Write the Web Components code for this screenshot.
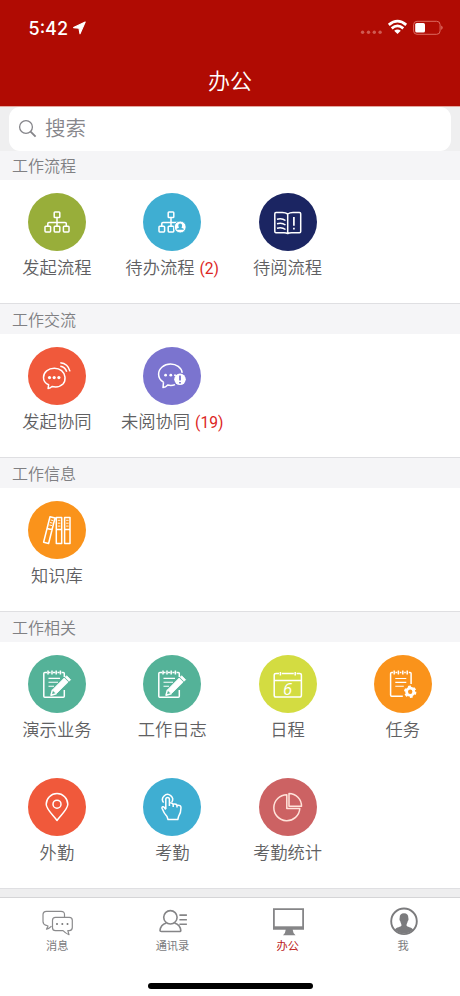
<!DOCTYPE html>
<html lang="zh-CN">
<head>
<meta charset="utf-8">
<title>办公</title>
<style>
body{margin:0;background:#fff;font-family:Inter,"Noto Sans CJK SC",sans-serif;overflow:hidden}
</style>
</head>
<body>
<office-app></office-app>
<script>
const ORG = (dx) => `<g transform="translate(${dx} 0)"><rect x="26.2" y="19" width="5.6" height="5.6" rx=".8"/><path d="M29 24.6V33M19.8 33V30.6Q19.8 29.5 21 29.5H37Q38.3 29.5 38.3 30.6V33"/><rect x="17" y="33.3" width="5.6" height="5.6" rx=".8"/><rect x="26.2" y="33.3" width="5.6" height="5.6" rx=".8"/>`;
const PAD = `<path d="M19 17.6H16.8Q15.8 17.6 15.8 18.6V41.2Q15.8 42.2 16.8 42.2H35.3Q36.3 42.2 36.3 41.2V35M20.6 17.6H22.6M25 17.6H27.2M29.4 17.6H31.4M33.6 17.6H35.3Q36.3 17.6 36.3 18.6V22M20 15.4V19.4M24 15.4V19.4M28.2 15.4V19.4M32.4 15.4V19.4"/>`;
const NOTE = PAD + `<path d="M20.5 23.4H32M20.5 27.2H30M20.5 31.2H26" stroke-width="1.1"/><path d="M38.6 20.7L42.6 24.7L41.1 26.2L37.1 22.2Z" fill="#fff" stroke-width=".8"/><path d="M36.2 23L40.2 27L28.3 38.7L24.4 34.9Z" fill="#fff" stroke-width=".8"/><path d="M24.4 34.9L23 40.2L28.3 38.7"/>`;
const ICONS = {
  org: ORG(0) + `<rect x="35.4" y="33.3" width="5.6" height="5.6" rx=".8"/></g>`,
  orgUser: ORG(-1) + `</g><circle cx="37.2" cy="34" r="5.9" fill="#fff" stroke="#3faed2" stroke-width=".8"/><path d="M37.2 30.5a1.9 1.9 0 0 1 1.9 2c0 1-.6 1.5-.6 2.2l2.2 1v1.1h-7v-1.1l2.2-1c0-.7-.6-1.2-.6-2.2a1.9 1.9 0 0 1 1.9-2Z" fill="#3faed2" stroke="none"/>`,
  book: `<path d="M28.7 21Q26.5 19.6 23.5 19.6H17Q15.8 19.6 15.8 20.8V38.6Q15.8 39.8 17 39.8H23.5Q27 39.5 28.7 40.5Q30.5 39.5 34 39.8H40.5Q41.7 39.8 41.7 38.6V20.8Q41.7 19.6 40.5 19.6H34Q30.8 19.6 28.7 21ZM28.7 21V40M18 26.2Q23 24.8 26.5 27.5M18 30.7Q23 29.3 26.5 32M18 35.2Q23 33.8 26.5 36.5"/><path d="M34.9 24V32.8M34.9 34.8V36.4" stroke-width="1.7"/>`,
  chat: `<path d="M20.6 37.8L20.1 41.5Q22.3 41.2 24 39.5Q31 41 35 37Q37.3 34.5 37 30.2C36.4 24.7 32 21.3 26.4 21.3C20.3 21.3 15.5 25.2 15.5 30.4C15.5 33.6 17.5 36.3 20.6 37.8Z"/><g fill="#fff" stroke="none"><circle cx="21.5" cy="30.6" r="1.6"/><circle cx="26.2" cy="30.6" r="1.6"/><circle cx="30.9" cy="30.6" r="1.6"/></g><path d="M32.3 15.8Q40 16.5 42 24.4M32.3 19.2Q37 19.7 38.7 24.7"/>`,
  chatAlert: `<path d="M20.5 35.2L20 40.6Q22.6 40.3 24.7 38Q28.5 39 32 37.6M39.2 25.8C38.4 20.5 33.3 17 27.5 17C21 17 15.6 21.6 15.6 27.3C15.6 30.5 17.5 33.5 20.5 35.2"/><g fill="#fff" stroke="none"><circle cx="22.6" cy="28.2" r="1.4"/><circle cx="27.8" cy="28.2" r="1.4"/><circle cx="32" cy="28.2" r="1"/><circle cx="37" cy="32.3" r="5.8"/></g><path d="M37 28.5V33.4M37 35V36.5" stroke="#7b74cf" stroke-width="1.8"/>`,
  books: `<path d="M22 15.8L27 17L20.6 42.5L15.6 41.2ZM28.3 16.4H33.7V42.5H28.3ZM36.6 16.4H42V42.5H36.6ZM19 27.4L24.4 28.8M28.3 28.6H33.7M36.6 28.6H42"/><path d="M22.7 19L25.2 19.6M22 21.5L24.5 22.1M21.4 24L24 24.6M29.8 19.3H32.3M29.8 22.2H32.3M29.8 25.1H32.3M38.1 19.3H40.6M38.1 22.2H40.6M38.1 25.1H40.6" stroke-width=".9"/>`,
  note: NOTE,
  calendar: `<path d="M20 18.6H17Q15.2 18.6 15.2 20.3V40.2Q15.2 42 17 42H40.6Q42.4 42 42.4 40.2V20.3Q42.4 18.6 40.6 18.6H37.6M22.8 18.6H34.8M15.2 25.4H42.4M21.4 17V20.5M36.2 17V20.5"/><text x="28.6" y="39.9" text-anchor="middle" font-family="Open Sans,sans-serif" font-size="16.5" font-style="italic" font-weight="400" fill="#fff" stroke="none">6</text>`,
  task: `<g transform="translate(.8 0)"><path d="M18.2 17.6H16.8Q15.8 17.6 15.8 18.6V40Q15.8 41.2 16.8 41.2H28M20.6 17.6H22.4M25 17.6H26.6M29.4 17.6H31M34 17.6H35.3Q36.3 17.6 36.3 18.6V29M19.4 15.4V19.4M23.6 15.4V19.4M28 15.4V19.4M32.4 15.4V19.4"/><path d="M20.5 23.5H31.5M20.5 27.4H31.5M20.5 31.3H29" stroke-width="1.1"/></g><circle cx="36.2" cy="36.8" r="3.6" stroke-width="2.8"/><circle cx="36.2" cy="36.8" r="5.2" stroke-width="2" stroke-dasharray="2.8 2.645"/>`,
  pin: `<path d="M29 42.5C26 38 18.2 31.5 18.2 26.3A10.8 10.8 0 0 1 39.8 26.3C39.8 31.5 32 38 29 42.5Z"/><circle cx="29" cy="26.2" r="4"/>`,
  hand: `<path d="M22.8 31V21.2Q22.8 19.4 24.6 19.4Q26.4 19.4 26.4 21.2V28M26.4 28V24.9Q30.2 24.6 30.2 27.2V29M30.2 26Q34 25.4 34 28.2V29.5M34 27.3Q38 26.8 38 29.8C38 34 37.3 36 35.5 38.7L34.8 41.5H25L24 38.6C22 36.5 20.5 34 19 30.2C18.6 28.6 20.5 28.4 21.3 29.5L22.8 31.5"/><path d="M20.6 24.6A5 5 0 1 1 28.8 24.2"/>`,
  pie: `<g stroke="#ffe3da"><path d="M27.8 16.7A13 13 0 1 0 40.8 30.5H27.8Z"/><path d="M30 15.5V28.3H42.5A12.7 12.7 0 0 0 30 15.5Z"/></g>`
};

function define(name, html) {
  const tpl = document.createElement('template');
  customElements.define(name, class extends HTMLElement {
    connectedCallback() {
      if (this.shadowRoot) return;
      tpl.innerHTML = typeof html === 'function' ? html(this) : html;
      this.attachShadow({mode: 'open'}).append(tpl.content.cloneNode(true));
    }
  });
}

define('status-bar', `<style>
:host{display:flex;align-items:center;height:56px;padding:0 17px 0 28.5px;box-sizing:border-box;color:#fff}
time{font-size:18px;font-weight:550;letter-spacing:0;width:43.5px}
.loc{margin-right:auto}
svg{display:block}
</style><time>5:42</time>
<svg class="loc" width="15" height="14" viewBox="0 0 15 14"><path d="M13.2 1L1.6 6.6L7 7.3L8 12.8Z" fill="#fff" stroke="#fff" stroke-width="1.1" stroke-linejoin="round"/></svg>
<svg width="83" height="20" viewBox="0 0 83 20"><g fill="#cf5b52"><circle cx="2.6" cy="14.3" r="1.7"/><circle cx="8.5" cy="14.3" r="1.7"/><circle cx="14.3" cy="14.3" r="1.7"/><circle cx="20.1" cy="14.3" r="1.7"/></g>
<g fill="none" stroke="#fff" stroke-width="2.7"><path d="M28.8 6.9Q37.5-.5 46.2 6.9"/><path d="M31.7 10.4Q37.5 5.5 43.3 10.4"/></g><path d="M34.2 12.7Q37.5 10.2 40.8 12.7L37.5 16Z" fill="#fff"/>
<rect x="53.6" y="3.3" width="26.5" height="13" rx="3.4" fill="none" stroke="#dc6a60"/><rect x="55.2" y="5" width="9.8" height="9.6" rx="1.6" fill="#fff"/><path d="M81.2 7.6Q84.3 9.8 81.2 12Z" fill="#dc6a60"/></svg>`);

define('nav-header', `<style>
:host{display:block;height:107px;background:#b00b03;color:#fff;box-sizing:border-box;border-bottom:1px solid #e4a79f}
h1{margin:0;font-size:22px;line-height:32px;font-weight:350;text-align:center;padding-top:8.5px}
</style><status-bar></status-bar><h1><slot></slot></h1>`);

define('search-field', `<style>
:host{display:block;height:44px;background:#efeff0;padding:0 9px;box-sizing:border-box}
div{height:44px;background:#fff;border-radius:11px;display:flex;align-items:center;padding-left:9px;gap:8px;box-sizing:border-box;color:#86868b;font-size:20.5px;line-height:30px;font-weight:350}
svg{margin-top:-2px}span{margin-top:-1px}
</style><div><svg width="19" height="19" viewBox="0 0 19 19" fill="none" stroke="#85858a"><circle cx="8" cy="8" r="6.4" stroke-width="1.3"/><path d="M12.6 12.6L17.6 17.6" stroke-width="1.9"/></svg><span><slot></slot></span></div>`);

define('app-section', el => `<style>
:host{display:block;border-bottom:1px solid #dfdfe2}
:host([first]) h2{height:29px;padding-top:3px}
h2{margin:0;height:30px;box-sizing:border-box;background:#f5f5f7;color:#808083;font-size:16px;line-height:24px;padding:4px 12px 0;font-weight:350}
.grid{display:grid;grid-template-columns:repeat(4,115.3px);grid-auto-rows:123px;margin-left:-.5px}
</style><h2>${el.getAttribute('heading')}</h2><div class="grid"><slot></slot></div>`);

define('app-tile', el => `<style>
:host{display:flex;flex-direction:column;align-items:center;padding-top:12.5px;box-sizing:border-box;min-width:0}
.disc{width:58px;height:58px;border-radius:50%;background:${el.getAttribute('color')};flex:none}
svg{display:block}
p{margin:4.5px 0 0 -.5px;font-size:17.3px;line-height:26px;color:#606062;white-space:nowrap;font-weight:350}
b{font-family:Roboto,sans-serif;font-weight:400;color:#dc2523;font-size:15.6px;margin-left:5px}
</style><div class="disc"><svg width="58" height="58" viewBox="0 0 58 58" fill="none" stroke="#fff" stroke-width="1.5" stroke-linejoin="round">${ICONS[el.getAttribute('icon')]}</svg></div>
<p><slot></slot>${el.hasAttribute('count') ? `<b>(${el.getAttribute('count')})</b>` : ''}</p>`);

define('tab-item', `<style>
:host{display:flex;flex-direction:column;align-items:center;color:#7b7b7d;font-size:11.2px;line-height:16px;padding-top:7px}
:host([active]){color:#bb1a19}
::slotted(svg){display:block;width:34px;height:32px;margin-bottom:1px}
</style><slot name="icon"></slot><span><slot></slot></span>`);

define('tab-bar', `<style>
:host{display:flex;flex-direction:column;align-items:center;height:108px;background:#fff;border-top:1px solid #d5d5d7;box-sizing:border-box;margin-top:8px}
nav{display:grid;grid-template-columns:repeat(4,115.3px);width:460px;margin-left:-1px;height:85px}
.home{width:165px;height:6px;border-radius:3px;background:#000}
</style><nav><slot></slot></nav><div class="home"></div>`);

define('office-app', `<style>
:host{display:block;width:460px;height:996px;background:#eeeeef;overflow:hidden}
app-section{background:#fff}
</style>
<nav-header>办公</nav-header>
<search-field>搜索</search-field>
<app-section first heading="工作流程">
<app-tile icon="org" color="#98ae3a">发起流程</app-tile><app-tile icon="orgUser" color="#3faed2" count="2">待办流程</app-tile><app-tile icon="book" color="#1b2562">待阅流程</app-tile></app-section>
<app-section heading="工作交流">
<app-tile icon="chat" color="#f0593b">发起协同</app-tile><app-tile icon="chatAlert" color="#7b74cf" count="19">未阅协同</app-tile></app-section>
<app-section heading="工作信息"><app-tile icon="books" color="#fa931b">知识库</app-tile></app-section>
<app-section heading="工作相关">
<app-tile icon="note" color="#54b298">演示业务</app-tile><app-tile icon="note" color="#54b298">工作日志</app-tile><app-tile icon="calendar" color="#d3dc41">日程</app-tile><app-tile icon="task" color="#fa931b">任务</app-tile>
<app-tile icon="pin" color="#f0593b">外勤</app-tile><app-tile icon="hand" color="#3faed2">考勤</app-tile><app-tile icon="pie" color="#cc6263">考勤统计</app-tile></app-section>
<tab-bar>
<tab-item><svg slot="icon" viewBox="0 0 34 32" fill="none" stroke="#8b8b8d" stroke-width="1.2" stroke-linejoin="round"><path d="M24.5 12V9.5Q24.5 6.3 21 6.3H6.5Q3 6.3 3 9.8V16.5Q3 19.5 6.2 20.3L8 21L6.5 24.2Q9.5 23.5 11.5 21.2"/><path d="M15.5 12.3H29.3Q32.3 12.3 32.3 15.3V22.5Q32.3 25.5 29.3 25.7H27.8L29 29.7Q25.7 28.5 23 25.7H15.5Q12.5 25.7 12.5 22.7V15.3Q12.5 12.3 15.5 12.3Z"/><g fill="#777" stroke="none"><circle cx="17" cy="19" r="1"/><circle cx="22.3" cy="19" r="1"/><circle cx="27.5" cy="19" r="1"/></g></svg>消息</tab-item>
<tab-item><svg slot="icon" viewBox="0 0 34 32" fill="none" stroke="#858587" stroke-width="1.6" stroke-linejoin="round"><circle cx="15.4" cy="12.3" r="6.7"/><path d="M11.4 17.9Q5.4 19.8 5 25.5Q5 26.5 6.4 26.5H24.4Q25.9 26.5 25.8 25.5Q25.4 19.8 19.4 17.9M24.4 10.1H31.9M24.4 14.7H31.9M24.4 19.3H31.9"/></svg>通讯录</tab-item>
<tab-item active><svg slot="icon" viewBox="0 0 34 32"><path d="M2 3.2H33V24.8H21.7Q22 28.5 24.5 30.2H12Q14.5 28.5 14.7 24.8H2Z" fill="#858587"/><path d="M3.8 5H31.2V21.3H3.8Z" fill="#fff"/></svg>办公</tab-item>
<tab-item><svg slot="icon" viewBox="0 0 34 32"><circle cx="18" cy="16.3" r="12.8" fill="#fff" stroke="#7b7b7d" stroke-width="1.9"/><path transform="translate(.2 0)" d="M17.8 8.2C21 8.2 22.3 10.2 22.1 13.2C22.6 13.7 22.3 15.6 21.6 16.1C21.3 18 20.3 18.8 20.3 20.4C20.8 22 25.2 21.8 27 24.6A12.8 12.8 0 0 1 8.6 24.6C10.4 21.8 14.8 22 15.3 20.4C15.3 18.8 14.3 18 14 16.1C13.3 15.6 13 13.7 13.5 13.2C13.3 10.2 14.6 8.2 17.8 8.2Z" fill="#7b7b7d"/></svg>我</tab-item>
</tab-bar>`);
</script>
</body>
</html>
